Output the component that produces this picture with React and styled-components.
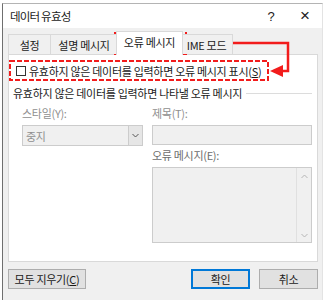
import React from "react";
import styled, { createGlobalStyle, css } from "styled-components";

const GlobalStyle = createGlobalStyle`
    html, body {
        margin: 0;
        padding: 0;
        background: #ffffff;
    }
    body {
        width: 327px;
        height: 300px;
        overflow: hidden;
        font-family: "Noto Sans CJK KR", "Noto Sans", sans-serif;
        font-size: 11px;
        letter-spacing: -0.3px;
        color: #1a1a1a;
    }
`;

//window frame
const Window = styled.div`
    margin: 3px 0 0 2px;
    width: 321px;
    height: 297px;
    box-sizing: border-box;
    border-top: 1px solid #b4b4b4;
    border-left: 1px solid #6f6f6f;
    border-right: 1px solid #e3e3e3;
    display: flex;
    flex-direction: column;
`;

const TitleBar = styled.div`
    height: 24px;
    flex: none;
    background: #ffffff;
    display: flex;
    align-items: center;
    justify-content: space-between;
    padding: 0 0 0 7px;
`;

const Title = styled.span`
    font-size: 11.5px;
    letter-spacing: -0.8px;
    color: #1a1a1a;
`;

const TitleButtons = styled.div`
    display: flex;
    align-items: center;
    height: 100%;
`;

const TitleButton = styled.span`
    width: 34px;
    display: flex;
    justify-content: center;
    font-family: "Liberation Sans", sans-serif;
    letter-spacing: 0;
    font-size: ${props => props.big ? "17px" : "13px"};
    color: #222;
`;

const Body = styled.div`
    position: relative;
    flex: 1;
    background: #f0f0f0;
    padding: 4px 4px 0 5px;
`;

//tabs
const Tabs = styled.div`
    display: flex;
    align-items: flex-end;
    height: 22px;
    position: relative;
    z-index: 1;
`;

const Tab = styled.div`
    height: 20px;
    box-sizing: border-box;
    width: ${props => props.w}px;
    border: 1px solid #d9d9d9;
    border-bottom: none;
    margin-left: -1px;
    background: #f0f0f0;
    display: flex;
    align-items: center;
    justify-content: center;
    white-space: nowrap;
    &:first-child {
        margin-left: 0;
    }
    ${props => props.active && css`
        position: relative;
        margin: 0 -2px -1px -2px;
        background: #ffffff;
        padding-bottom: 3px;
        height: 24px;
    `}
`;

const Panel = styled.div`
    width: 310px;
    height: 208px;
    box-sizing: border-box;
    background: #ffffff;
    border: 1px solid #d9d9d9;
    padding: 6px 0 0 0;
`;

const CheckRow = styled.label`
    position: relative;
    display: inline-flex;
    align-items: center;
    height: 19px;
    padding: 0 8px 0 7px;
    white-space: nowrap;
`;

const Checkbox = styled.span`
    width: 10px;
    height: 10px;
    box-sizing: border-box;
    border: 1px solid #333;
    background: #fff;
    margin-right: 3px;
`;

const Key = styled.span`
    text-decoration: underline;
    text-underline-offset: 1px;
`;

const DashBox = styled.svg`
    position: absolute;
    left: ${props => props.x}px;
    top: ${props => props.y}px;
    overflow: visible;
    pointer-events: none;
`;

const Highlight = ({ x, y, w, h }) => (
    <DashBox x={x} y={y} width={w} height={h}>
        <rect x="1" y="1" width={w - 2} height={h - 2} fill="none" stroke="#f21c1c" strokeWidth="2" strokeDasharray="5 2" />
    </DashBox>
);

const Section = styled.div`
    display: flex;
    align-items: center;
    padding: 0 5px 0 4px;
    margin-top: 4px;
    height: 18px;
`;

const SectionTitle = styled.span`
    white-space: nowrap;
    margin-right: 4px;
`;

const Rule = styled.div`
    flex: 1;
    height: 1px;
    background: #dcdcdc;
`;

const Fields = styled.div`
    display: grid;
    grid-template-columns: 121px 160px;
    column-gap: 9px;
    padding: 2px 0 0 13px;
`;

const Column = styled.div`
    display: flex;
    flex-direction: column;
`;

const FieldLabel = styled.div`
    height: 18px;
    display: flex;
    align-items: center;
    color: ${props => props.dark ? "#6d6d6d" : "#8f8f8f"};
    margin-bottom: 3px;
    margin-top: ${props => props.gap || 0}px;
`;

const Select = styled.div`
    height: 21px;
    box-sizing: border-box;
    border: 1px solid #cccccc;
    background: #f0f0f0;
    display: flex;
    align-items: stretch;
    color: #8f8f8f;
`;

const SelectValue = styled.span`
    flex: 1;
    display: flex;
    align-items: center;
    padding-left: 3px;
`;

const SelectButton = styled.span`
    width: 13px;
    border-left: 1px solid #cccccc;
    background: #e6e6e6;
    display: flex;
    align-items: center;
    justify-content: center;
`;

const Input = styled.div`
    height: ${props => props.h}px;
    box-sizing: border-box;
    border: 1px solid #cccccc;
    background: #f0f0f0;
    display: flex;
    justify-content: flex-end;
`;

const ScrollBar = styled.div`
    width: 14px;
    border-left: 1px solid #e0e0e0;
    display: flex;
    flex-direction: column;
    justify-content: space-between;
    align-items: center;
    padding: 6px 0 4px;
`;

const Footer = styled.div`
    display: flex;
    align-items: center;
    margin-top: 7px;
    width: 310px;
`;

const Button = styled.div`
    height: 20px;
    width: ${props => props.w}px;
    box-sizing: border-box;
    background: #e1e1e1;
    border: 1px solid ${props => props.primary ? "#0078d7" : "#adadad"};
    box-shadow: ${props => props.primary ? "inset 0 0 0 1px #0078d7" : "none"};
    display: flex;
    align-items: center;
    justify-content: center;
    white-space: nowrap;
    margin-left: ${props => props.ml || 0}px;
`;

const Arrow = styled.svg`
    position: absolute;
    left: 0;
    top: 0;
    pointer-events: none;
    overflow: visible;
`;

const Chevron = ({ up, color = "#555" }) => (
    <svg width="7" height="5" viewBox="0 0 7 5">
        <path d={up ? "M0.5 4 L3.5 1 L6.5 4" : "M0.5 1 L3.5 4 L6.5 1"} fill="none" stroke={color} strokeWidth="1" />
    </svg>
);

const App = () => {
    return (
        <>
            <GlobalStyle />
            <Window>
                <TitleBar>
                    <Title>데이터 유효성</Title>
                    <TitleButtons>
                        <TitleButton>?</TitleButton>
                        <TitleButton big>×</TitleButton>
                    </TitleButtons>
                </TitleBar>
                <Body>
                    <Tabs>
                        <Tab w={43}>설정</Tab>
                        <Tab w={68}>설명 메시지</Tab>
                        <Tab w={67} active>오류 메시지</Tab>
                        <Tab w={53}>IME 모드</Tab>
                    </Tabs>
                    <Panel>
                        <CheckRow>
                            <Checkbox />
                            <span>유효하지 않은 데이터를 입력하면 오류 메시지 표시(<Key>S</Key>)</span>
                        </CheckRow>
                        <Section>
                            <SectionTitle>유효하지 않은 데이터를 입력하면 나타낼 오류 메시지</SectionTitle>
                            <Rule />
                        </Section>
                        <Fields>
                            <Column>
                                <FieldLabel>스타일(Y):</FieldLabel>
                                <Select>
                                    <SelectValue>중지</SelectValue>
                                    <SelectButton><Chevron /></SelectButton>
                                </Select>
                            </Column>
                            <Column>
                                <FieldLabel>제목(T):</FieldLabel>
                                <Input h={20} />
                                <FieldLabel dark gap={1}>오류 메시지(E):</FieldLabel>
                                <Input h={76}>
                                    <ScrollBar>
                                        <Chevron up color="#b5b5b5" />
                                        <Chevron color="#b5b5b5" />
                                    </ScrollBar>
                                </Input>
                            </Column>
                        </Fields>
                    </Panel>
                    <Footer>
                        <Button w={78}>모두 지우기(<Key>C</Key>)</Button>
                        <Button w={59} ml={105} primary>확인</Button>
                        <Button w={59} ml={9}>취소</Button>
                    </Footer>
                    <Highlight x={111} y={4} w={73} h={23} />
                    <Highlight x={6} y={32} w={260} h={21} />
                    <Arrow width="300" height="60">
                        <path d="M184 15 H285 V43 H278" fill="none" stroke="#f21c1c" strokeWidth="2.5" />
                        <path d="M267 43 L280 37 L280 49 Z" fill="#f21c1c" />
                    </Arrow>
                </Body>
            </Window>
        </>
    );
};

export default App;
